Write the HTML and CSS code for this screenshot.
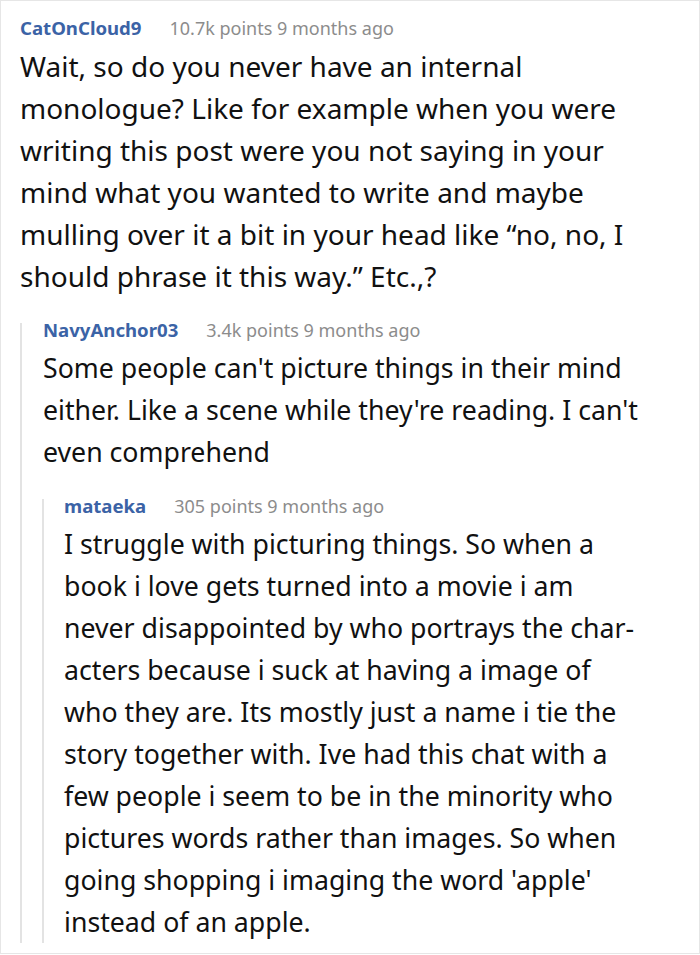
FILE: index.html
```html
<!DOCTYPE html>
<html lang="en">
<head>
<meta charset="utf-8">
<link rel="stylesheet" href="styles.css">
</head>
<body>
<div class="thread">
  <div class="comment">
    <div class="meta"><span class="user">CatOnCloud9</span><span class="info">10.7k points 9 months ago</span></div>
    <p class="body top">Wait, so do you never have an internal<br>monologue? Like for example when you were<br>writing this post were you not saying in your<br>mind what you wanted to write and maybe<br>mulling over it a bit in your head like “no, no, I<br>should phrase it this way.” Etc.,?</p>
    <div class="children">
      <div class="comment">
        <div class="meta"><span class="user">NavyAnchor03</span><span class="info">3.4k points 9 months ago</span></div>
        <p class="body">Some people can't picture things in their mind<br>either. Like a scene while they're reading. I can't<br>even comprehend</p>
        <div class="children inner">
          <div class="comment">
            <div class="meta"><span class="user">mataeka</span><span class="info">305 points 9 months ago</span></div>
            <p class="body last">I struggle with picturing things. So when a<br>book i love gets turned into a movie i am<br>never disappointed by who portrays the char-<br>acters because i suck at having a image of<br>who they are. Its mostly just a name i tie the<br>story together with. Ive had this chat with a<br>few people i seem to be in the minority who<br>pictures words rather than images. So when<br>going shopping i imaging the word 'apple'<br>instead of an apple.</p>
          </div>
        </div>
      </div>
    </div>
  </div>
</div>
</body>
</html>
```

FILE: styles.css
```css
html, body {
  margin: 0;
  padding: 0;
  background: #fff;
}
.thread {
  box-sizing: border-box;
  width: 700px;
  height: 954px;
  border: 1px solid #e6e6e6;
  padding: 20px 0 0 19px;
  font-family: "Noto Sans", "Open Sans", sans-serif;
  overflow: hidden;
}
.meta {
  line-height: 14px;
  height: 14px;
  white-space: nowrap;
}
.user {
  font-size: 18.6px;
  font-weight: 700;
  color: #3b63a6;
  margin-right: 28px;
}
.info {
  font-size: 18px;
  color: #8c8c8c;
}
.body {
  margin: 10px 0 0 0;
  font-size: 26.7px;
  line-height: 42px;
  color: #111;
  white-space: nowrap;
}
.body.top {
  font-size: 28px;
}
.body.last {
  margin-bottom: -11px;
}
.children {
  margin-top: 26px;
  border-left: 2px solid #e3e3e3;
  padding-left: 21px;
}
.children.inner {
  margin-left: -1px;
  padding-left: 20px;
}
```
